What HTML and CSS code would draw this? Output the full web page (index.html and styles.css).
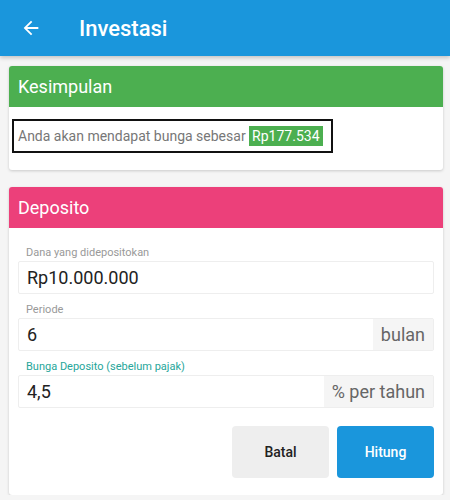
FILE: index.html
```html
<!DOCTYPE html>
<html lang="id">
<head>
    <meta charset="UTF-8">
    <meta name="viewport" content="width=device-width, initial-scale=1.0">
    <title>Investasi</title>
    <link rel="stylesheet" href="styles.css">
</head>
<body>
    <div class="appbar">
        <svg class="back" width="22" height="22" viewBox="0 0 24 24">
            <path d="M20 11H7.83l5.59-5.59L12 4l-8 8 8 8 1.41-1.41L7.83 13H20v-2z" fill="#fff"/>
        </svg>
        <span class="title">Investasi</span>
    </div>

    <div class="card">
        <div class="card-head green">Kesimpulan</div>
        <div class="card-body summary">
            <div class="result-box">
                Anda akan mendapat bunga sebesar <span class="amount">Rp177.534</span>
            </div>
        </div>
    </div>

    <div class="card">
        <div class="card-head pink">Deposito</div>
        <div class="card-body form">
            <label class="field-label">Dana yang didepositokan</label>
            <div class="field">
                <input type="text" value="Rp10.000.000">
            </div>
            <label class="field-label">Periode</label>
            <div class="field">
                <input type="text" value="6">
                <span class="addon">bulan</span>
            </div>
            <label class="field-label active">Bunga Deposito (sebelum pajak)</label>
            <div class="field">
                <input type="text" value="4,5">
                <span class="addon">% per tahun</span>
            </div>
            <div class="actions">
                <button class="btn btn-cancel">Batal</button>
                <button class="btn btn-primary">Hitung</button>
            </div>
        </div>
    </div>
</body>
</html>
```
FILE: styles.css
```css
body {
    font-family: Roboto, "Noto Sans", Arial, sans-serif;
    background-color: #f5f5f5;
    margin: 0;
    padding: 0;
    overflow: hidden;
}
.appbar {
    height: 56px;
    background: #1a96dc;
    display: flex;
    align-items: center;
    padding: 0 0 0 20px;
    box-shadow: 0 2px 4px rgba(0, 0, 0, 0.2);
}
.back {
    display: block;
}
.title {
    color: #fff;
    font-size: 22px;
    font-weight: 500;
    margin-left: 37px;
}
.card {
    margin: 10px 7px 0 9px;
    background: #fff;
    border-radius: 3px;
    box-shadow: 0 1px 3px rgba(0, 0, 0, 0.18);
    overflow: hidden;
}
.card + .card {
    margin-top: 17px;
}
.card-head {
    height: 41px;
    line-height: 41px;
    padding: 0 9px;
    color: #fff;
    font-size: 18px;
}
.green {
    background: #4caf50;
}
.pink {
    background: #ec407a;
}
.summary {
    padding: 12px 3px 17px 3px;
}
.result-box {
    display: inline-block;
    border: 2px solid #111;
    padding: 7px 8px 7px 4px;
    font-size: 14px;
    color: #777;
}
.amount {
    background: #4caf50;
    color: #fff;
    padding: 2px 3px;
}
.form {
    padding: 18px 9px 17px 9px;
}
.field-label {
    display: block;
    font-size: 11px;
    color: #999;
    padding-left: 8px;
    margin-bottom: 2px;
}
.field-label.active {
    color: #26a69a;
}
.field {
    display: flex;
    border: 1px solid #eee;
    border-radius: 2px;
    height: 31px;
    margin-bottom: 9px;
}
.field input {
    flex: 1;
    min-width: 0;
    border: none;
    outline: none;
    padding: 0 8px;
    font-family: inherit;
    font-size: 18px;
    color: #222;
    background: transparent;
}
.addon {
    background: #f5f5f5;
    color: #666;
    font-size: 18px;
    padding: 0 8px;
    line-height: 31px;
}
.actions {
    display: flex;
    justify-content: flex-end;
    gap: 8px;
    margin-top: 18px;
}
.btn {
    width: 97px;
    height: 52px;
    border: none;
    border-radius: 4px;
    font-family: inherit;
    font-size: 14px;
    font-weight: 500;
    cursor: pointer;
}
.btn-cancel {
    background: #eeeeee;
    color: #222;
}
.btn-primary {
    background: #1a96dc;
    color: #fff;
}
```
